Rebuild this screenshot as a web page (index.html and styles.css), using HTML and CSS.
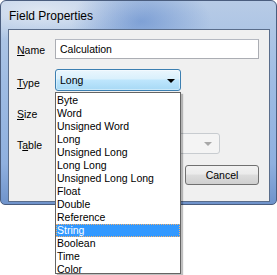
FILE: index.html
```html
<!DOCTYPE html>
<html>
<head lang="en">
    <meta charset="UTF-8">
    <title>Field Properties</title>
    <link rel="stylesheet" href="styles.css">
</head>
<body>
<div id="window">
    <div id="titlebar">Field Properties</div>
    <div id="client">
        <div class="row row-name">
            <label class="label"><u>N</u>ame</label>
            <div class="textbox">Calculation</div>
        </div>
        <div class="row row-type">
            <label class="label"><u>T</u>ype</label>
            <div class="combo active">
                <span>Long</span>
                <i class="arrow"></i>
            </div>
        </div>
        <div class="row row-size">
            <label class="label"><u>S</u>ize</label>
            <div class="textbox small"></div>
        </div>
        <div class="row row-table">
            <label class="label">T<u>a</u>ble</label>
            <div class="combo disabled">
                <span></span>
                <i class="arrow"></i>
            </div>
        </div>
        <div class="buttons">
            <!-- OK button sits under the open list -->
            <div class="button"></div>
            <div class="button">Cancel</div>
        </div>
    </div>
</div>
<ul id="droplist">
    <li>Byte</li>
    <li>Word</li>
    <li>Unsigned Word</li>
    <li>Long</li>
    <li>Unsigned Long</li>
    <li>Long Long</li>
    <li>Unsigned Long Long</li>
    <li>Float</li>
    <li>Double</li>
    <li>Reference</li>
    <li class="selected">String</li>
    <li>Boolean</li>
    <li>Time</li>
    <li>Color</li>
</ul>
</body>
</html>
```

FILE: styles.css
```css
* {
    margin: 0;
    padding: 0;
    box-sizing: border-box;
}

body {
    background: #ffffff;
    font-family: "Liberation Sans", Arial, sans-serif;
    font-size: 10.5px;
    color: #000000;
}

ul {
    list-style: none;
}

#window {
    width: 277px;
    height: 205px;
    padding: 0 6px 3px 7px;
    border: 1px solid #4a5d7e;
    border-radius: 6px 6px 5px 5px;
    background:
        radial-gradient(ellipse 70px 40px at 140px 20px, rgba(84, 128, 200, 0.55), rgba(84, 128, 200, 0) 100%),
        radial-gradient(ellipse 110px 30px at 40px 10px, rgba(230, 236, 244, 0.85), rgba(230, 236, 244, 0) 100%),
        linear-gradient(180deg, #b7cbe6 0%, #9fbce3 40%, #8fb0df 80%, #6f93cb 100%);
}

#titlebar {
    height: 28px;
    padding: 8px 0 0 1px;
    font-size: 12px;
    color: #000000;
}

#client {
    height: 173px;
    padding: 9px 10px 0 8px;
    border: 1px solid #5a6d8b;
    background: #f0f0f0;
}

.row {
    display: flex;
    align-items: center;
}

.label {
    width: 38px;
    padding-top: 2px;
}

.label u {
    text-decoration: underline;
}

.row-name {
    height: 20px;
}

.row-type {
    height: 22px;
    margin-top: 10px;
}

.row-type .label {
    padding-top: 5px;
}

.row-size {
    height: 21px;
    margin-top: 10px;
}

.row-size .label {
    padding-top: 4px;
}

.row-table {
    height: 21px;
    margin-top: 11px;
}

.row-table .label {
    padding-top: 3px;
}

.textbox {
    width: 204px;
    height: 20px;
    padding: 3px 4px 0;
    border: 1px solid #abadb3;
    border-top-color: #b5b9c2;
    background: #ffffff;
    font-size: 10.5px;
}

.textbox.small {
    width: 100px;
}

.combo {
    display: flex;
    align-items: center;
    justify-content: space-between;
    width: 126px;
    height: 22px;
    padding: 0 5px 0 4px;
    border: 1px solid #3c7fb1;
    border-radius: 3px;
}

.combo.active {
    background: linear-gradient(180deg, #eaf6fd 0%, #d9f0fc 45%, #bee6fd 50%, #a7d9f5 100%);
    box-shadow: inset 0 0 0 1px rgba(255, 255, 255, 0.4);
}

.combo.disabled {
    width: 165px;
    height: 21px;
    border-color: #c8ccd0;
    background: #f4f4f4;
}

.arrow {
    width: 0;
    height: 0;
    border-left: 4px solid transparent;
    border-right: 4px solid transparent;
    border-top: 4px solid #000000;
    margin-top: 1px;
}

.combo.disabled .arrow {
    border-top-color: #a8a8a8;
    margin-right: 2px;
}

.buttons {
    display: flex;
    justify-content: flex-end;
    gap: 7px;
    margin-top: 11px;
}

.button {
    width: 74px;
    height: 20px;
    padding-top: 3px;
    border: 1px solid #707070;
    border-radius: 3px;
    background: linear-gradient(180deg, #f2f2f2 0%, #ebebeb 45%, #dddddd 50%, #cfcfcf 100%);
    text-align: center;
    font-size: 10.5px;
}

#droplist {
    position: absolute;
    left: 55px;
    top: 92px;
    width: 126px;
    height: 182px;
    padding: 1px 0;
    border: 1px solid #646464;
    background: #ffffff;
    box-shadow: 2px 2px 1px rgba(0, 0, 0, 0.25);
}

#droplist li {
    height: 13px;
    padding-left: 1px;
    line-height: 13px;
    white-space: nowrap;
}

#droplist .selected {
    background: #3399ff;
    color: #ffffff;
    outline: 1px dotted #f0b070;
    outline-offset: -1px;
}
```
